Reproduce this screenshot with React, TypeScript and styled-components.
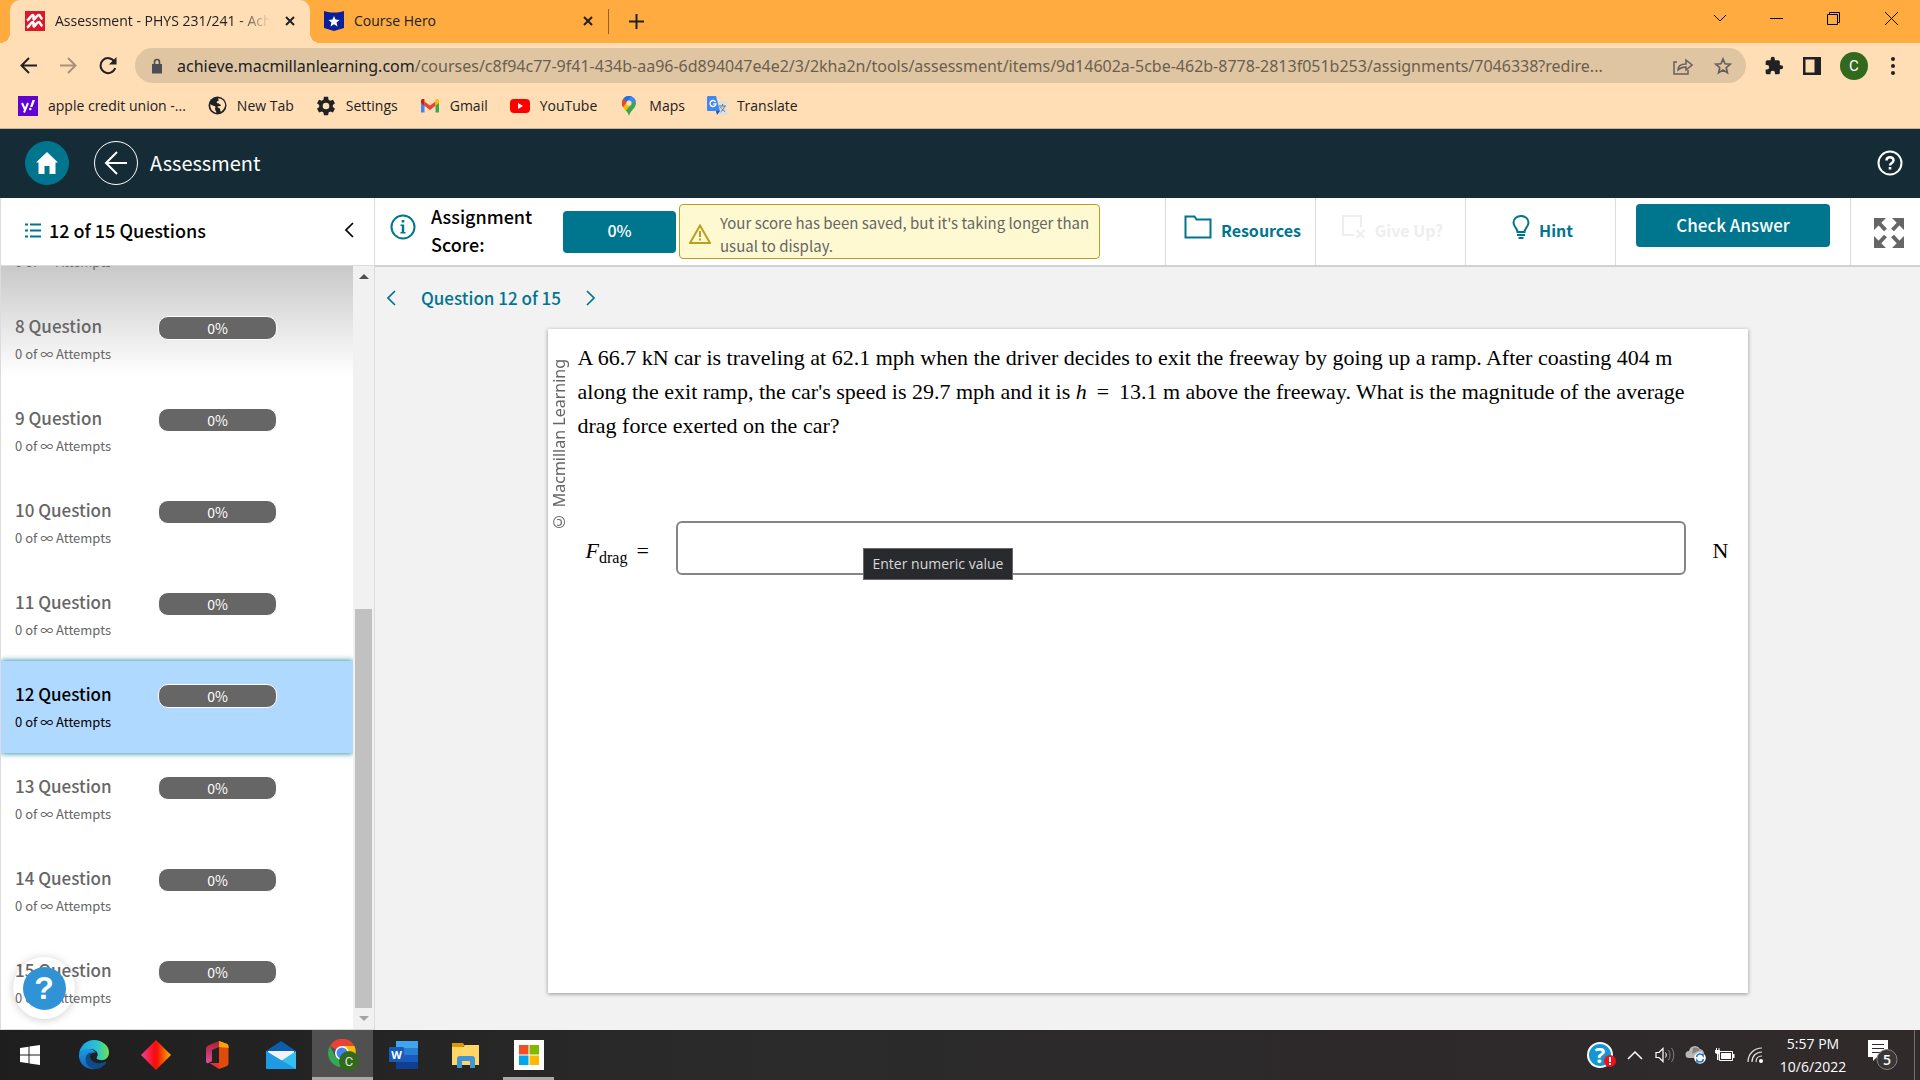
import React from "react";
import styled, { createGlobalStyle } from "styled-components";

const ui = `"Open Sans", "Noto Sans", sans-serif`;
const site = `"Noto Sans CJK SC", "Noto Sans", sans-serif`;
const serif = `"Liberation Serif", "Times New Roman", serif`;
const teal = "#00758e";

const Global = createGlobalStyle`
  *, *::before, *::after { box-sizing: border-box; }
  body { margin: 0; font-family: ${site}; color: #000; }
  button { border: 0; padding: 0; background: none; font: inherit; color: inherit; cursor: pointer; }
  a { color: inherit; text-decoration: none; }
  h1, h2, p, ul { margin: 0; padding: 0; font-weight: inherit; font-size: inherit; }
  ul { list-style: none; }
  svg { display: block; flex: none; }
`;

const Screen = styled.div`
  height: 100vh;
  display: flex;
  flex-direction: column;
  overflow: hidden;
`;

/* ---------- browser ---------- */
const Browser = styled.header`
  font-family: ${ui};
  color: #202124;
  background: #ffdeb5;
  border-bottom: 1px solid #c9b195;
`;
const TabStrip = styled.div`
  height: 43px;
  display: flex;
  background: #ffab40;
  padding-left: 10px;
`;
const Tab = styled.div<{ $active?: boolean }>`
  position: relative;
  display: flex;
  align-items: center;
  gap: 10px;
  width: ${p => (p.$active ? 300 : 298)}px;
  padding: 0 10px 2px ${p => (p.$active ? 15 : 14)}px;
  font-size: 14px;
  background: ${p => (p.$active ? "#ffdeb5" : "transparent")};
  border-radius: 10px 10px 0 0;
  &::before, &::after {
    content: "";
    display: ${p => (p.$active ? "block" : "none")};
    position: absolute;
    bottom: 0;
    width: 10px;
    height: 10px;
  }
  &::before { left: -10px; background: radial-gradient(circle at 0 0, transparent 10px, #ffdeb5 10px); }
  &::after { right: -10px; background: radial-gradient(circle at 100% 0, transparent 10px, #ffdeb5 10px); }
`;
const TabTitle = styled.span<{ $fade?: boolean }>`
  flex: 1;
  min-width: 0;
  white-space: nowrap;
  overflow: hidden;
  ${p => p.$fade && "mask-image: linear-gradient(90deg, #000 85%, transparent);"}
`;
const IconButton = styled.button<{ $w?: number }>`
  width: ${p => p.$w ?? 20}px;
  height: 40px;
  flex: none;
  display: flex;
  align-items: center;
  justify-content: center;
`;
const TabEnd = styled.div`
  display: flex;
  align-items: center;
  &::before { content: ""; width: 1px; height: 25px; background: #8a6534; margin-right: 15px; }
`;
const WindowControls = styled.div`
  margin-left: auto;
  display: flex;
  height: 36px;
  align-items: center;
`;
const Toolbar = styled.div`
  height: 45px;
  display: flex;
  align-items: center;
  padding: 0 8px;
`;
const Omnibox = styled.div`
  flex: 1;
  min-width: 0;
  height: 35px;
  margin: 0 18px 0 7px;
  padding: 0 13px 0 15px;
  display: flex;
  align-items: center;
  gap: 13px;
  border-radius: 18px;
  background: #dfc5a2;
`;
const OmniboxActions = styled.div`
  display: flex;
  align-items: center;
  gap: 20px;
`;
const Url = styled.a`
  flex: 1;
  min-width: 0;
  overflow: hidden;
  white-space: nowrap;
  font-family: "Noto Sans", sans-serif;
  font-size: 16px;
  color: #6b5f50;
  b { font-weight: 400; color: #202124; }
`;
const Avatar = styled.button`
  width: 28px;
  height: 28px;
  margin-right: 6px;
  border-radius: 50%;
  background: #33691e;
  color: #fff;
  font: 15px Roboto, sans-serif;
`;
const Bookmarks = styled.nav`
  height: 40px;
  display: flex;
  align-items: center;
  padding: 0 18px 5px;
  gap: 22px;
  font-size: 14px;
`;
const Bookmark = styled.a`
  display: flex;
  align-items: center;
  gap: 10px;
  white-space: nowrap;
`;

/* ---------- site header ---------- */
const SiteHeader = styled.header`
  height: 69px;
  flex: none;
  display: flex;
  align-items: center;
  padding: 0 18px 1px 25px;
  background: #152b36;
  color: #fff;
`;
const RoundLink = styled.a<{ $solid?: boolean }>`
  width: 44px;
  height: 44px;
  border-radius: 50%;
  display: flex;
  align-items: center;
  justify-content: center;
  background: ${p => (p.$solid ? teal : "transparent")};
  border: 1px solid ${p => (p.$solid ? teal : "#fff")};
  margin-right: ${p => (p.$solid ? 25 : 12)}px;
`;
const SiteTitle = styled.h1`
  flex: 1;
  font-size: 20px;
  line-height: 28px;
`;

/* ---------- body ---------- */
const Body = styled.div`
  flex: 1;
  min-height: 0;
  display: flex;
  background: #f2f2f2;
`;
const Sidebar = styled.aside`
  position: relative;
  width: 375px;
  flex: none;
  display: flex;
  flex-direction: column;
  background: #fff;
  border: 1px solid #dcdcdc;
  border-top: 0;
`;
const SidebarHead = styled.div`
  height: 68px;
  flex: none;
  display: flex;
  align-items: center;
  gap: 8px;
  padding: 0 20px 3px 24px;
  border-bottom: 1px solid #dcdcdc;
  font-size: 18px;
  font-weight: 500;
  h2 { flex: 1; }
`;
const ListArea = styled.div`
  flex: 1;
  min-height: 0;
  display: flex;
`;
const List = styled.ul`
  position: relative;
  flex: 1;
  display: flex;
  flex-direction: column;
  justify-content: flex-end;
  overflow: hidden;
  background: linear-gradient(#c8c8c8, #fff 110px);
`;
const Item = styled.li<{ $current?: boolean }>`
  height: 92px;
  flex: none;
  display: grid;
  grid-template-columns: 143px 119px;
  align-content: start;
  padding: 19px 0 0 14px;
  color: ${p => (p.$current ? "#000" : "#666")};
  background: ${p => (p.$current ? "#b0d9ff" : "transparent")};
  box-shadow: ${p => (p.$current ? `0 0 6px ${teal}` : "none")};
`;
const ItemTitle = styled.a`
  font-size: 17px;
  line-height: 28px;
  font-weight: 500;
`;
const Attempts = styled.span`
  grid-column: 1 / -1;
  font-size: 13px;
  line-height: 27px;
`;
const Badge = styled.span`
  height: 24px;
  margin-top: 4px;
  border: 1px solid #fff;
  border-radius: 10px;
  background: #666;
  color: #fff;
  font-size: 14px;
  line-height: 22px;
  text-align: center;
`;
const ScrollTrack = styled.div`
  width: 21px;
  padding-left: 2px;
  display: flex;
  flex-direction: column;
  justify-content: space-between;
  background: #f1f1f1;
`;
const ScrollButton = styled.button`
  width: 17px;
  height: 21px;
  display: flex;
  align-items: center;
  justify-content: center;
`;
const Thumb = styled.div`
  width: 17px;
  height: 399px;
  margin-top: auto;
  background: #c1c1c1;
`;
const HelpBubble = styled.button`
  position: absolute;
  left: 12px;
  bottom: 10px;
  width: 62px;
  height: 62px;
  display: flex;
  align-items: center;
  justify-content: center;
  border-radius: 50%;
  box-shadow: 0 1px 8px rgba(0, 0, 0, 0.2);
  span {
    width: 43px;
    height: 43px;
    border-radius: 50%;
    background: #2f93d6;
    color: #fff;
    font: 700 32px/43px "Liberation Sans", Arial, sans-serif;
  }
`;
const Main = styled.main`
  flex: 1;
  min-width: 0;
  display: flex;
  flex-direction: column;
`;
const ActionBar = styled.div`
  height: 69px;
  flex: none;
  display: flex;
  background: #fff;
  border-bottom: 2px solid #d2d2d2;
  font-weight: 500;
`;
const ScoreGroup = styled.div`
  flex: 1;
  min-width: 0;
  display: flex;
  align-items: flex-start;
  padding: 6px 0 0 15px;
`;
const InfoButton = styled.button`
  margin: 10px 15px 0 0;
`;
const ScoreLabel = styled.span`
  width: 132px;
  margin-top: -2px;
  font-size: 18px;
  line-height: 28px;
`;
const Score = styled.span`
  width: 113px;
  margin: 7px 3px 0 0;
  padding-bottom: 4px;
  border-radius: 4px;
  background: ${teal};
  color: #fff;
  font-size: 16px;
  line-height: 38px;
  text-align: center;
`;
const Notice = styled.p`
  width: 421px;
  height: 55px;
  display: flex;
  align-items: center;
  gap: 9px;
  padding: 4px 9px 0;
  border: 1px solid #b8a01f;
  border-radius: 4px;
  background: #fff9d1;
  color: #666;
  font-size: 15px;
  font-weight: 400;
  line-height: 23px;
`;
const Action = styled.button<{ $off?: boolean }>`
  width: 150px;
  display: flex;
  align-items: center;
  justify-content: center;
  gap: 9px;
  padding: 0 0 3px 4px;
  border-left: 1px solid #dcdcdc;
  color: ${p => (p.$off ? "#eeeeee" : teal)};
  font-size: 16px;
  font-weight: 600;
  svg { margin-bottom: 6px; }
`;
const CheckCell = styled.div`
  width: 235px;
  padding: 6px 20px;
  border-left: 1px solid #dcdcdc;
`;
const CheckButton = styled.button`
  width: 100%;
  height: 43px;
  padding-bottom: 3px;
  border-radius: 4px;
  background: ${teal};
  color: #fff;
  font-size: 17px;
  font-weight: 500;
`;
const ExpandButton = styled.button`
  width: 70px;
  padding: 2px 0 0 6px;
  display: flex;
  align-items: center;
  justify-content: center;
  border-left: 1px solid #dcdcdc;
`;
const QuestionNav = styled.nav`
  height: 62px;
  flex: none;
  display: flex;
  align-items: center;
  gap: 25px;
  padding: 0 12px 1px;
  color: ${teal};
  font-size: 17px;
  font-weight: 500;
`;
const Card = styled.section`
  flex: 1;
  width: calc(100% - 48px);
  max-width: 1200px;
  margin: 0 auto 37px;
  display: flex;
  background: #fff;
  box-shadow: 0 1px 4px rgba(0, 0, 0, 0.4);
`;
const Copyright = styled.span`
  writing-mode: vertical-rl;
  transform: rotate(180deg);
  align-self: flex-start;
  width: 22px;
  margin-right: 8px;
  padding-bottom: 30px;
  font: 16px/22px "Noto Sans", sans-serif;
  color: #666;
`;
const Problem = styled.div`
  flex: 1;
  padding: 12px 19px 0 0;
  font: 22px/34px ${serif};
`;
const Statement = styled.p`
  min-height: 180px;
  padding-right: 20px;
`;
const AnswerRow = styled.div`
  position: relative;
  display: flex;
  align-items: center;
  gap: 27px;
`;
const AnswerLabel = styled.label`
  width: 98px;
  padding: 5px 0 0 8px;
  margin-right: -27px;
  sub { font-size: 16px; line-height: 0; vertical-align: -5px; margin-right: 9px; }
`;
const Unit = styled.span`
  padding-top: 5px;
`;
const AnswerInput = styled.input`
  flex: 1;
  min-width: 0;
  height: 54px;
  border: 2px solid #858585;
  border-radius: 6px;
  padding: 0 12px;
  font: inherit;
`;
const Tooltip = styled.span`
  position: absolute;
  left: 285px;
  top: 27px;
  padding: 0 9px;
  border: 1px solid #6a6a6c;
  background: #292a2e;
  color: #d8d8d8;
  font: 14px/30px ${ui};
  white-space: nowrap;
`;

/* ---------- taskbar ---------- */
const Taskbar = styled.footer`
  height: 50px;
  flex: none;
  display: flex;
  background: linear-gradient(90deg, #1e1e1e, #2b2b2b 40%, #2e292a 80%, #302a2b);
  font-family: ${ui};
  color: #fff;
`;
const Task = styled.button<{ $active?: boolean; $open?: boolean; $w?: number }>`
  width: ${p => p.$w ?? 61}px;
  height: 50px;
  display: flex;
  align-items: center;
  justify-content: center;
  background: ${p => (p.$active ? "#505050" : "transparent")};
  box-shadow: ${p => (p.$active || p.$open ? "inset 0 -3px #aaa7a7" : "none")};
  ${p => p.$open && "margin-left: 6px;"}
`;
const Tray = styled.div`
  margin-left: auto;
  display: flex;
  align-items: center;
  padding-right: 5px;
`;
const Clock = styled.time`
  width: 78px;
  margin: 0 8px 0 4px;
  font-size: 14px;
  line-height: 23px;
  text-align: center;
`;
const ShowDesktop = styled.button`
  width: 1px;
  height: 50px;
  margin-left: 8px;
  background: #77706f;
`;

type IconProps = { w: number; h?: number; vb?: string; children: React.ReactNode };
const Svg = ({ w, h = w, vb, children }: IconProps) => (
  <svg width={w} height={h} viewBox={vb ?? `0 0 ${w} ${h}`} fill="none" stroke="none" aria-hidden="true">{children}</svg>
);

const CloseX = () => <Svg w={10}><path d="M1 1l8 8M9 1l-8 8" stroke="#202124" strokeWidth="2" /></Svg>;
const Chevron = ({ right, w = 9, color = teal }: { right?: boolean; w?: number; color?: string }) => (
  <Svg w={w} h={16} vb="0 0 9 16"><path d={right ? "M1 1l7 7-7 7" : "M8 1L1 8l7 7"} stroke={color} strokeWidth="1.700" /></Svg>
);

const Question = ({ n, current }: { n: number; current?: boolean }) => (
  <Item $current={current}>
    <ItemTitle href="#">{n} Question</ItemTitle>
    <Badge>0%</Badge>
    <Attempts>0 of ∞ Attempts</Attempts>
  </Item>
);

const ChromeBar = () => (
  <Browser>
    <TabStrip>
      <Tab $active>
        <Svg w={20}><path d="M0 0h20v20H0z" fill="#d8192b" /><path d="M2 9.500C5 8 5.500 4 8 4c1.500 1 0 3 .8 4.500C11 7.500 11.500 4 14 4c1.800.5.8 3 3.500 4M2 16.500C5 15 5.500 11 8 11c1.500 1 0 3 .8 4.500 2.200-1 2.700-4.500 5.200-4.500 1.800.5.8 3 3.500 4" stroke="#fff" strokeWidth="2.600" strokeLinejoin="round" /></Svg>
        <TabTitle $fade>Assessment - PHYS 231/241 - Achieve</TabTitle>
        <IconButton aria-label="Close tab"><CloseX /></IconButton>
      </Tab>
      <Tab>
        <Svg w={20}><path d="M0 0c7 2 13 2 20 0v17l-10 3-10-3z" fill="#0a1f9c" /><path d="M10 5l1.500 3.600 4 .3-3 2.600 1 4-3.500-2.200-3.500 2.200 1-4-3-2.600 4-.3z" fill="#fff" /></Svg>
        <TabTitle>Course Hero</TabTitle>
        <IconButton aria-label="Close tab"><CloseX /></IconButton>
      </Tab>
      <TabEnd><IconButton $w={24} aria-label="New tab"><Svg w={15}><path d="M7.500 0v15M0 7.500h15" stroke="#202124" strokeWidth="2" /></Svg></IconButton></TabEnd>
      <WindowControls>
        <IconButton $w={57} aria-label="Search tabs"><Svg w={14} h={8}><path d="M1 1l6 6 6-6" stroke="#000" /></Svg></IconButton>
        <IconButton $w={57} aria-label="Minimize"><Svg w={13} h={1}><path d="M0 0h13v1H0z" fill="#000" /></Svg></IconButton>
        <IconButton $w={57} aria-label="Restore"><Svg w={13}><path d="M.5 2.500h10v10H.5zM2.500 2.500v-2h10v10h-2" stroke="#000" /></Svg></IconButton>
        <IconButton $w={58} aria-label="Close"><Svg w={13}><path d="M0 0l13 13M13 0L0 13" stroke="#000" /></Svg></IconButton>
      </WindowControls>
    </TabStrip>
    <Toolbar>
      <IconButton $w={40} aria-label="Back"><Svg w={17}><path d="M17 8.500H2M9 1L1.500 8.500 9 16" stroke="#202124" strokeWidth="2" /></Svg></IconButton>
      <IconButton $w={40} aria-label="Forward"><Svg w={17}><path d="M0 8.500h15M8 1l7.500 7.500L8 16" stroke="#a89279" strokeWidth="2" /></Svg></IconButton>
      <IconButton $w={40} aria-label="Reload"><Svg w={18}><path d="M15.500 4.700A7.500 7.500 0 1 0 16.200 11" stroke="#202124" strokeWidth="2" /><path d="M17.500 0v7.500H10z" fill="#202124" /></Svg></IconButton>
      <Omnibox>
        <Svg w={14} h={16}><path d="M2 6h10v9.500H2z" fill="#4d4e53" /><path d="M4.500 7V4a2.500 2.500 0 0 1 5 0v3" stroke="#4d4e53" strokeWidth="1.600" /></Svg>
        <Url href="#"><b>achieve.macmillanlearning.com</b>/courses/c8f94c77-9f41-434b-aa96-6d894047e4e2/3/2kha2n/tools/assessment/items/9d14602a-5cbe-462b-8778-2813f051b253/assignments/7046338?redire...</Url>
        <OmniboxActions>
          <Svg w={20} h={18}><path d="M4 5H1v12h14v-4M5 13c0-4 3-6 8-6V3l6 5-6 5v-3c-4 0-6 1-8 3z" stroke="#665f60" strokeWidth="1.500" /></Svg>
          <Svg w={20} vb="0 0 20 20"><path d="M10 3l2 4.800 5.200.4-4 3.500 1.200 5.100-4.400-2.700-4.400 2.700 1.200-5.100-4-3.500 5.200-.4z" stroke="#665f60" strokeWidth="1.700" /></Svg>
        </OmniboxActions>
      </Omnibox>
      <IconButton aria-label="Extensions"><Svg w={20} vb="0 0 24 24"><path d="M20.500 11H19V7a2 2 0 0 0-2-2h-4V3.500a2.500 2.500 0 0 0-5 0V5H4a2 2 0 0 0-2 2v3.800h1.500a2.700 2.700 0 0 1 0 5.400H2V20a2 2 0 0 0 2 2h3.800v-1.500a2.700 2.700 0 0 1 5.400 0V22H17a2 2 0 0 0 2-2v-4h1.500a2.500 2.500 0 0 0 0-5z" fill="#202124" /></Svg></IconButton>
      <IconButton $w={56} aria-label="Side panel"><Svg w={18}><path d="M0 0h18v18H0z" fill="#202124" /><path d="M2.500 2.500h9v13h-9z" fill="#ffdeb5" /></Svg></IconButton>
      <Avatar aria-label="Profile">C</Avatar>
      <IconButton $w={38} aria-label="Menu"><Svg w={4} h={18}><circle cx="2" cy="2" r="2" fill="#202124" /><circle cx="2" cy="9" r="2" fill="#202124" /><circle cx="2" cy="16" r="2" fill="#202124" /></Svg></IconButton>
    </Toolbar>
    <Bookmarks>
      <Bookmark href="#"><Svg w={20}><path d="M0 0h20v20H0z" fill="#5f01d1" /><path d="M4 7l3 6.500M10 7L6 16.500" stroke="#fff" strokeWidth="2" /><path d="M14.500 4H17l-2.500 7H12z" fill="#fff" /><circle cx="12.300" cy="13" r="1.300" fill="#fff" /></Svg>apple credit union -...</Bookmark>
      <Bookmark href="#"><Svg w={19}><circle cx="9.500" cy="9.500" r="9" fill="#202124" /><path d="M10 2.200c4 0 7 3 7.200 7-.5 3-2.200 5-4.200 6.500-1-.5-.5-2-1-3-.7-1-2.500-.5-2.500-2.200 1-.3 3 0 3.500-1.200-.5-1-2-.8-2.300-2-.7-.3-2 .2-2-.9 0-1.400 1.500-1 2-1.800.2-.8-.5-1.500-.7-2.400zM2.300 8c1.500 1.500 3.500 1.500 5 2.500.5 1-.3 1.700-.3 2.500 0 1.500 1.500 1.800 1.300 3.700-3.500-.7-6-3.500-6-7.500z" fill="#ffdeb5" /></Svg>New Tab</Bookmark>
      <Bookmark href="#"><Svg w={20} vb="0 0 24 24"><path fillRule="evenodd" d="M9.500 1h5l.6 3.400 2 1.200L20.300 4.400l2.500 4.300-2.600 2.200v2.300l2.600 2.200-2.500 4.300-3.200-1.200-2 1.200-.6 3.300h-5l-.6-3.300-2-1.200-3.200 1.200-2.500-4.300 2.600-2.200v-2.300L1.200 8.700l2.500-4.300 3.200 1.200 2-1.200zM12 8a4 4 0 1 0 0 8 4 4 0 0 0 0-8z" fill="#202124" /></Svg>Settings</Bookmark>
      <Bookmark href="#"><Svg w={20} h={16}><path d="M1 3v11.500h3.500V6z" fill="#4285f4" /><path d="M19 3v11.500h-3.500V6z" fill="#34a853" /><path d="M4.500 3.500L10 7.500l5.500-4v4.300L10 12 4.500 7.800z" fill="#ea4335" /><path d="M1 5V3c0-2 2-2.500 3.500-1.500v6.300z" fill="#c5221f" /><path d="M19 5V3c0-2-2-2.500-3.500-1.500v6.300z" fill="#fbbc04" /></Svg>Gmail</Bookmark>
      <Bookmark href="#"><Svg w={20} h={14}><rect width="20" height="14" rx="4" fill="#f00" /><path d="M8 4l5 3-5 3z" fill="#fff" /></Svg>YouTube</Bookmark>
      <Bookmark href="#"><Svg w={20}><path d="M10 20C9 15 3 12 3 7a7 7 0 0 1 14 0c0 5-6 8-7 13z" fill="#34a853" /><path d="M4.600 2.500L8 5.300l-4 6C3 9.500 2 6 4.600 2.500z" fill="#ea4335" /><path d="M4.600 2.500C6.500 0 10-.7 12.500.5L8 5.500z" fill="#1a73e8" /><path d="M12.300.4c2 .8 3.800 2.500 4.400 4.600L12 9 8 5.300z" fill="#4285f4" /><path d="M4 11.300l4.300-5.500 3.700 3-5.400 6z" fill="#fbbc04" /><circle cx="10" cy="7" r="2.600" fill="#ffdeb5" /></Svg>Maps</Bookmark>
      <Bookmark href="#"><Svg w={20}><path d="M9 5h11v14h-8z" fill="#dedede" /><path d="M12 10h7M15.500 8v2M17.500 10c-.5 3-2.500 5-4 6M13.500 11c1 2 2.500 3.500 4.500 4.500" stroke="#607988" /><path d="M1.500 0H9l4 15H1.500C.5 15 0 14.500 0 13.500v-12C0 .5.500 0 1.500 0z" fill="#4285f4" /><path d="M13 15l-3 4-1-4z" fill="#1a4fbb" /><path d="M8.500 5.800A3 3 0 1 0 9 8H6.300" stroke="#fff" strokeWidth="1.400" /></Svg>Translate</Bookmark>
    </Bookmarks>
  </Browser>
);

const WindowsTaskbar = () => (
  <Taskbar>
    <Task $w={60} aria-label="Start"><Svg w={20}><path d="M0 3l8.500-1.200v7.700H0zM9.500 1.600L20 0v9.500H9.500zM0 10.500h8.500v7.700L0 17zM9.500 10.500H20V20L9.500 18.400z" fill="#fff" /></Svg></Task>
    <Task $w={67} aria-label="Edge">
      <Svg w={30} vb="0 0 32 32">
        <defs>
          <linearGradient id="e1" x1="0" x2="1"><stop offset="0" stopColor="#1b9de2" /><stop offset=".6" stopColor="#2cc3d2" /><stop offset="1" stopColor="#6be54d" /></linearGradient>
          <linearGradient id="e2" y2="1" x2="0"><stop offset="0" stopColor="#1b9de2" /><stop offset="1" stopColor="#1262b8" /></linearGradient>
        </defs>
        <path d="M0 15C1 6 8 0 16 0c9 0 16 6 16 13 0 6-4 8.500-8 8.500-4 0-6-1.500-5-3 3-4-1-9-7-9C6 9.500 1 12 0 15z" fill="url(#e1)" />
        <path d="M0 15c2-4 6-6 11-5.500 4 .5 6 2.500 7 4-7-1-9 5-6 10 2 3.500 6 6 9 7C9 34-1 26 0 15z" fill="url(#e2)" />
        <path d="M14 13c-3 2-3 7 1 10 4 2.500 9 2 13.500 0 1 0 1 1 0 2-3 4-8 6.500-12.500 6-6-2-9.500-6-9-11 .3-4 3-7 7-7z" fill="#114a8b" />
      </Svg>
    </Task>
    <Task $w={58} aria-label="Diamond app"><Svg w={30}><defs><linearGradient id="d1"><stop offset="0" stopColor="#f0449c" /><stop offset=".45" stopColor="#f80c12" /><stop offset=".55" stopColor="#f0180a" /><stop offset="1" stopColor="#ffb000" /></linearGradient></defs><path d="M15 0l15 15-15 15L0 15z" fill="url(#d1)" /></Svg></Task>
    <Task $w={64} aria-label="Office"><Svg w={24} h={30} vb="0 -1 24 30"><defs><linearGradient id="o1" y2="1" x2="0"><stop offset="0" stopColor="#b0202c" /><stop offset="1" stopColor="#d8509c" /></linearGradient></defs><path d="M14 0L4 4C2 5 1 6 1 8v12c0 2 1 2.500 2.500 2L7 20V9l7-3z" fill="url(#o1)" /><path d="M14 0l7 2.500c2 .7 2.500 1.500 2.500 3v17c0 1.500-.8 2.300-2.500 3L14 28z" fill="#e04a0a" /><path d="M14 0l7 2.500c2 .7 2.500 1.500 2.500 3V7L14 6z" fill="#f9a400" /><path d="M4.500 22H14v6z" fill="#e83038" /></Svg></Task>
    <Task $w={63} aria-label="Mail"><Svg w={30} h={28}><path d="M0 10L15 0l15 10v5H0z" fill="#0a5eab" /><path d="M2 10h26v6L15 20 2 15z" fill="#f2f2f2" /><path d="M0 10l15 10L30 10v18H0z" fill="#33bff0" /><path d="M0 10l30 18H0z" fill="#1f9be6" /></Svg></Task>
    <Task $active aria-label="Chrome">
      <Svg w={34} h={32}>
        <path d="M16 14L4 7a14 14 0 0 1 24.500 0z" fill="#ea4335" /><path d="M16 14l-6.500 4L4 7a14 14 0 0 0 10 21l4-8z" fill="#34a853" /><path d="M16 7h12.500c3 6 1 17-10 21l4-9z" fill="#fbbc04" /><circle cx="16" cy="14" r="7" fill="#fff" /><circle cx="16" cy="14" r="5.500" fill="#4285f4" />
        <circle cx="23" cy="22" r="10" fill="#33691e" /><text x="23" y="27" textAnchor="middle" fontFamily="Roboto, sans-serif" fontSize="13" fill="#dfe8d8">C</text>
      </Svg>
    </Task>
    <Task aria-label="Word"><Svg w={30} h={28}><path d="M7 0h22v7H7z" fill="#41a5ee" /><path d="M7 7h22v7H7z" fill="#2b7cd3" /><path d="M7 14h22v7H7z" fill="#185abd" /><path d="M7 21h22v7H7z" fill="#103f91" /><rect y="6" width="15" height="15" rx="1" fill="#185abd" /><text x="7.500" y="18" textAnchor="middle" fontFamily="Open Sans, sans-serif" fontWeight="700" fontSize="11" fill="#fff">W</text></Svg></Task>
    <Task $w={63} aria-label="File Explorer"><Svg w={28} h={26}><path d="M0 1h11l2 3h-2v4H0z" fill="#dd9a00" /><path d="M0 5h11l2-2h14v20H0z" fill="#ffd766" /><path d="M5 26V17c0-2 1-3 3-3h12c2 0 3 1 3 3v9h-5v-7H10v7z" fill="#3e95d8" /></Svg></Task>
    <Task $open $w={51} aria-label="Microsoft Store"><Svg w={30}><path d="M0 0h30v30H0z" fill="#fff" /><path d="M5 5h9.500v9.500H5z" fill="#f25022" /><path d="M15.500 5H25v9.500h-9.500z" fill="#7fba00" /><path d="M5 15.500h9.500V25H5z" fill="#00a4ef" /><path d="M15.500 15.500H25V25h-9.500z" fill="#ffb900" /></Svg></Task>
    <Tray>
      <IconButton $w={38} aria-label="Support"><Svg w={30} h={28}><circle cx="14" cy="14" r="13" fill="#fff" /><circle cx="14" cy="14" r="11" fill="#1296d4" /><text x="14" y="22" textAnchor="middle" fontFamily="Open Sans, sans-serif" fontWeight="700" fontSize="22" fill="#fff">?</text><circle cx="24" cy="20" r="6" fill="#f01018" /><path d="M24 16v5M24 22v2" stroke="#fff" strokeWidth="2" /></Svg></IconButton>
      <IconButton $w={30} aria-label="Show hidden icons"><Svg w={16} h={9}><path d="M1 8l7-7 7 7" stroke="#fff" strokeWidth="1.500" /></Svg></IconButton>
      <IconButton $w={30} aria-label="Volume"><Svg w={20} h={18}><path d="M1 6.500h3l4-4v13l-4-4H1z" stroke="#fff" strokeWidth="1.200" /><path d="M10.500 6.500c1 1.500 1 3.500 0 5" stroke="#fff" /><path d="M13.500 4c2 3 2 7 0 10M16.500 2c3 4 3 10 0 14" stroke="#8b8686" /></Svg></IconButton>
      <IconButton $w={30} aria-label="OneDrive"><Svg w={21} h={18}><path d="M4 12a3.500 3.500 0 0 1 0-7 6 6 0 0 1 11-2 5 5 0 0 1 3 8l-6 1z" fill="#b9b6b6" /><path d="M8 2a6 6 0 0 1 7 2l-8 4z" fill="#858282" /><circle cx="15" cy="12" r="5.800" fill="#fff" /><path d="M11.500 11a3.600 3.600 0 0 1 6.500-1.500v-2M18.500 13a3.600 3.600 0 0 1-6.500 1.500v2" stroke="#2474c4" strokeWidth="1.600" /></Svg></IconButton>
      <IconButton $w={30} aria-label="Battery"><Svg w={20} h={14}><path d="M4.500 3.500h13v9h-13z" stroke="#fff" /><path d="M6 5h10v6H6z" fill="#fff" /><path d="M18 6h1.500v4H18z" fill="#fff" /><path d="M0 2h5v3L3.500 6v6H2V6L0 5zM1 0h1v2H1zM3.500 0h1v2h-1z" fill="#fff" /></Svg></IconButton>
      <IconButton $w={30} aria-label="Network"><Svg w={16}><path d="M1 15C1 7 7 1 15 1M5 15C5 9 9 5 15 5M9 15c0-4 2-6 6-6" stroke="#e5e3e3" strokeWidth="1.200" /><circle cx="14" cy="14" r="2" fill="#fff" /></Svg></IconButton>
      <Clock>5:57 PM<br />10/6/2022</Clock>
      <IconButton $w={46} aria-label="Notifications"><Svg w={30} h={30}><path d="M0 0h20v17H9l-4 4v-4H0z" fill="#fff" /><path d="M4 4.500h12M4 8.500h12M4 12.500h8" stroke="#302a2b" /><circle cx="19" cy="19.500" r="10" fill="#3b3637" stroke="#888283" /><text x="19" y="25" textAnchor="middle" fontFamily="Open Sans, sans-serif" fontWeight="600" fontSize="14" fill="#fff">5</text></Svg></IconButton>
      <ShowDesktop aria-label="Show desktop" />
    </Tray>
  </Taskbar>
);

export default function App() {
  return (
    <Screen>
      <Global />
      <ChromeBar />
      <SiteHeader>
        <RoundLink href="#" $solid aria-label="Home"><Svg w={22} h={22}><path d="M11 0l11 10.500h-2.500V22H13.500v-8h-5v8H2.500V10.500H0z" fill="#fff" /></Svg></RoundLink>
        <RoundLink href="#" aria-label="Back"><Svg w={24}><path d="M23 12H2M13 1L2 12l11 11" stroke="#fff" strokeWidth="2" /></Svg></RoundLink>
        <SiteTitle>Assessment</SiteTitle>
        <IconButton $w={24} aria-label="Help"><Svg w={26}><circle cx="13" cy="13" r="11.500" stroke="#fff" strokeWidth="2" /><path d="M9.500 10.500c0-4.500 7-4.500 7 0 0 2.500-3.500 2.500-3.500 5" stroke="#fff" strokeWidth="2.500" /><path d="M11.700 17h2.600v2.500h-2.600z" fill="#fff" /></Svg></IconButton>
      </SiteHeader>
      <Body>
        <Sidebar>
          <SidebarHead>
            <Svg w={16} h={15}><path d="M0 1.500h3M5 1.500h11M0 7.500h3M5 7.500h11M0 13.500h3M5 13.500h11" stroke={teal} strokeWidth="2" /></Svg>
            <h2>12 of 15 Questions</h2>
            <button aria-label="Collapse"><Chevron color="#000" /></button>
          </SidebarHead>
          <ListArea>
            <List>
              {[7, 8, 9, 10, 11, 12, 13, 14, 15].map(n => <Question key={n} n={n} current={n === 12} />)}
            </List>
            <ScrollTrack>
              <ScrollButton aria-label="Scroll up"><Svg w={10} h={5}><path d="M5 0l5 5H0z" fill="#505050" /></Svg></ScrollButton>
              <Thumb />
              <ScrollButton aria-label="Scroll down"><Svg w={10} h={5}><path d="M0 0h10L5 5z" fill="#a3a3a3" /></Svg></ScrollButton>
            </ScrollTrack>
          </ListArea>
          <HelpBubble aria-label="Get help"><span>?</span></HelpBubble>
        </Sidebar>
        <Main>
          <ActionBar>
            <ScoreGroup>
              <InfoButton aria-label="Score details"><Svg w={26}><circle cx="13" cy="13" r="11.500" stroke={teal} strokeWidth="2" /><path d="M11.700 6h2.600v2.600h-2.600zM10.500 10.500h3.700V18h1.300v1.500h-5V18h1.300v-6h-1.300z" fill={teal} /></Svg></InfoButton>
              <ScoreLabel>Assignment<br />Score:</ScoreLabel>
              <Score>0%</Score>
              <Notice>
                <Svg w={22} h={20}><path d="M11 1.500L21 19H1z" stroke="#b8a01f" strokeWidth="2" /><path d="M11 7v6M11 14.500v2" stroke="#b8a01f" strokeWidth="2" /></Svg>
                <span>Your score has been saved, but it's taking longer than usual to display.</span>
              </Notice>
            </ScoreGroup>
            <Action><Svg w={28} h={24}><path d="M1.500 22.500v-21h9l2 3h14v18z" stroke={teal} strokeWidth="2" /></Svg>Resources</Action>
            <Action $off disabled><Svg w={24}><path d="M19 12V1H1v19h11M14.500 15l8 8M22.500 15l-8 8" stroke="#eee" strokeWidth="2" /></Svg>Give Up?</Action>
            <Action><Svg w={18} h={24}><path d="M5.500 17c0-4-4-5-4-9.500C1.500 3.500 5 1 9 1s7.500 2.500 7.500 6.500c0 4.500-4 5.500-4 9.500z" stroke={teal} strokeWidth="2" /><path d="M5 19h8v2H5zM6.500 22h5v2h-5z" fill={teal} /></Svg>Hint</Action>
            <CheckCell><CheckButton>Check Answer</CheckButton></CheckCell>
            <ExpandButton aria-label="Full screen"><Svg w={30}><path d="M0 0h12L0 12zM30 0H18l12 12zM0 30h12L0 18zM30 30H18l12-12z" fill="#666" /><path d="M4 4l7.500 8M26 4l-7.500 8M4 26l7.500-8M26 26l-7.500-8" stroke="#666" strokeWidth="4" /></Svg></ExpandButton>
          </ActionBar>
          <QuestionNav>
            <button aria-label="Previous question"><Chevron /></button>
            <span>Question 12 of 15</span>
            <button aria-label="Next question"><Chevron right /></button>
          </QuestionNav>
          <Card>
            <Copyright>© Macmillan Learning</Copyright>
            <Problem>
              <Statement>
                A 66.7 kN car is traveling at 62.1 mph when the driver decides to exit the freeway by going up a ramp. After coasting 404 m along the exit ramp, the car's speed is 29.7 mph and it is <i>h</i>&nbsp;&thinsp;=&nbsp;&thinsp;13.1 m above the freeway. What is the magnitude of the average drag force exerted on the car?
              </Statement>
              <AnswerRow>
                <AnswerLabel htmlFor="answer"><i>F</i><sub>drag</sub>=</AnswerLabel>
                <AnswerInput id="answer" />
                <Unit>N</Unit>
                <Tooltip role="tooltip">Enter numeric value</Tooltip>
              </AnswerRow>
            </Problem>
          </Card>
        </Main>
      </Body>
      <WindowsTaskbar />
    </Screen>
  );
}
